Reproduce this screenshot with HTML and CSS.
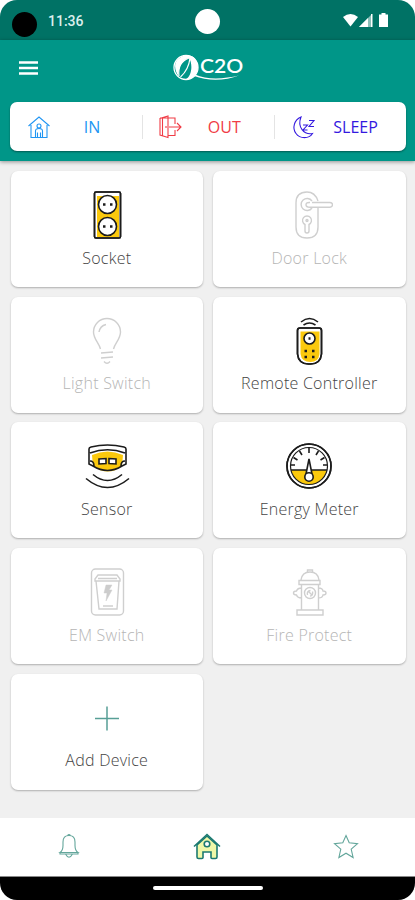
FILE: index.html
```html
<!DOCTYPE html>
<html lang="en">
<head>
  <meta charset="UTF-8">
  <meta name="viewport" content="width=device-width, initial-scale=1">
  <title>C2O</title>
  <link rel="stylesheet" href="styles.css">
</head>
<body>
<div class="phone">

  <div class="status">
    <span class="camera"></span>
    <span class="time">11:36</span>
    <span class="lens"></span>
    <svg class="signals" width="46" height="16" viewBox="0 0 46 16" fill="#fff">
      <path d="M0 4Q7.500-2 15 4L7.500 13.500z"/>
      <path d="M16 14L29 1v13z" opacity=".55"/>
      <path d="M16 14L25 5v9z"/>
      <path d="M28 1h1.500v13H28z"/>
      <path d="M38.500 0h4v1.500H45V14h-9V1.500h2.500z"/>
    </svg>
  </div>

  <header class="header">
    <div class="toolbar">
      <svg class="menu" width="20" height="14" viewBox="0 0 20 14" stroke="#fff" stroke-width="2.300">
        <path d="M0 1.500h19M0 7h19M0 12.500h19"/>
      </svg>
      <div class="logo">
        <svg width="68" height="28" viewBox="0 0 68 28" fill="none">
          <circle cx="13" cy="13.500" r="12" stroke="#fff" stroke-width="1.300"/>
          <path d="M12 1.500C20 0 25 6 25 13.500C25 20 20 26 12.500 25.500C19 22 20 10 16 4C10 5 5 13 5.500 22C1 16-1 5 12 1.500z" fill="#fff"/>
          <path d="M17 4C16 13 13 18 7.500 23M16 4C8 7 5 14 6 22" stroke="#fff" stroke-width="1.200"/>
          <path d="M22 20.500C34 26 51 25 66 21.500C52 27 34 27 21 22z" fill="#fff"/>
        </svg>
        <span class="logo-text">C2O</span>
      </div>
    </div>

    <div class="modes">
      <div class="mode in">
        <svg width="24" height="24" viewBox="0 0 24 24">
          <path d="M1.500 11L12 2l10.500 9M4 10v12.500h16V10M8.500 22v-6q0-2.500 3.500-2.500t3.500 2.500v6M10.500 22v-4.500M13.500 22v-4.500"/>
          <circle cx="12" cy="11" r="2"/>
        </svg>
        <span>IN</span>
      </div>
      <div class="mode out">
        <svg width="24" height="24" viewBox="0 0 24 24">
          <path d="M10 22.500L2 20V3.500L10 1v21.500zM2 3h15v6M17 15v5.500h-7M4.500 3v17.500M8 11v2M11 12h12M19 8l4 4-4 4"/>
        </svg>
        <span>OUT</span>
      </div>
      <div class="mode sleep">
        <svg width="24" height="24" viewBox="0 0 24 24">
          <path d="M9 2C2 5 0 13 4 18.500C8 24 17 24 20.500 18.500C12 20 5 12 9 2zM11 10h4.500l-4.500 5h4.500M17 5.500h5l-5 6h5"/>
        </svg>
        <span>SLEEP</span>
      </div>
    </div>
  </header>

  <main class="devices">
    <div class="card">
      <svg class="icon" viewBox="0 0 48 48">
        <rect x="11.500" y="1" width="26" height="46" rx="1.500" fill="#fff"/>
        <path class="fill" d="M14 5h22v41H14z"/>
        <rect x="11.500" y="1" width="26" height="46" rx="1.500"/>
        <circle cx="24.500" cy="13.500" r="9" fill="#fff"/>
        <circle cx="24.500" cy="35.500" r="9" fill="#fff"/>
        <path d="M20 13.500h2.500M27 13.500h2.500M20 35.500h2.500M27 35.500h2.500" stroke-width="2.500"/>
      </svg>
      <span>Socket</span>
    </div>

    <div class="card off">
      <svg class="icon" viewBox="0 0 48 48">
        <path d="M33 10Q30 1 22 1Q11 1 11 12v24q0 11 11 11t11-11V17"/>
        <path d="M27 11.500h18q2.500 0 2.500 2.300t-2.500 2.400H25q-4 0-4-2.500t4-2.200"/>
        <path d="M27 10a6 6 0 1 0 0 7"/>
        <path d="M20 33.500a4.500 4.500 0 1 1 4 0V40q0 2-2 2t-2-2z"/>
        <circle cx="22" cy="29.500" r="1"/>
      </svg>
      <span>Door Lock</span>
    </div>

    <div class="card off">
      <svg class="icon" viewBox="0 0 48 48">
        <path d="M17.500 32C16 26 10.500 22 10.500 15a13.500 13.500 0 0 1 27 0C37.500 22 32 26 30.500 32M16 15q1-6 7-7.500M18 36l12-1M18 41l12-1M21 44.500q3 3.500 6 0"/>
      </svg>
      <span>Light Switch</span>
    </div>

    <div class="card">
      <svg class="icon" viewBox="0 0 48 48">
        <path d="M16 5q8.500-7 17 0M18.500 8q6-4 12 0"/>
        <path d="M12.500 13.500q0-2.500 2.500-2.500h19q2.500 0 2.500 2.500V37q-1 10-11 10h-2q-10 0-11-10z" fill="#fff"/>
        <path class="fill" d="M15.500 14.500h19V37q-1 8-9 8q-9 0-10-8z"/>
        <path d="M12.500 13.500q0-2.500 2.500-2.500h19q2.500 0 2.500 2.500V37q-1 10-11 10h-2q-10 0-11-10z"/>
        <circle cx="24.500" cy="21.500" r="5.500" fill="#fff"/>
        <path d="M23.500 21.500h2M19.500 34h2.500M27 34h2.500M19.500 40h2.500M27 40h2.500" stroke-width="2.500"/>
      </svg>
      <span>Remote Controller</span>
    </div>

    <div class="card">
      <svg class="icon" viewBox="0 0 48 48">
        <path class="fill" d="M9 13q15.500-7 31 0l-1 11q-14 11-29 0z"/>
        <path d="M6 7q0-1.500 2-2 16.500-4 33 0 2 .5 2 2v15l-4 2q-14.500 9-29 0l-4-2zM7 11q17.500-6.500 35 0M7 19q4 0 4 5M42 19q-4 0-4 5"/>
        <path d="M16 17l7-.5v5l-7 .5zM26 16.500l7 .5v5l-7-.5z" fill="#fff"/>
        <path d="M10 32.500q14.500 12 29 0M3 36.500q21.500 18 43 0"/>
      </svg>
      <span>Sensor</span>
    </div>

    <div class="card">
      <svg class="icon" viewBox="0 0 48 48">
        <circle cx="24" cy="24" r="22" fill="#fff"/>
        <path class="fill" d="M6 28h36Q38 42 24 42.500Q10 42 6 28z"/>
        <circle cx="24" cy="24" r="22"/>
        <circle cx="24" cy="24" r="18.500" stroke-width="1.200"/>
        <path d="M6 28h36M24 6v5M14.500 9l2.500 4M33.500 9L31 13M8.500 15.500l4 2.500M39.500 15.500l-4 2.500M6 23h4M38 23h4"/>
        <path d="M24 17l-3 15h6z" fill="#fff"/>
        <circle cx="24" cy="35" r="4.200" fill="#fff"/>
      </svg>
      <span>Energy Meter</span>
    </div>

    <div class="card off">
      <svg class="icon" viewBox="0 0 48 48">
        <rect x="8.500" y="1" width="32" height="46" rx="4"/>
        <path d="M15 7h19l3 4v2H12v-2zM13 13l3 28h18l2-28M15 10.500h19M20 38h10"/>
        <path d="M23 17h6l-3 5h3l-6 11 1-8h-3z" fill="#ccc" stroke-width=".5"/>
      </svg>
      <span>EM Switch</span>
    </div>

    <div class="card off">
      <svg class="icon" viewBox="0 0 48 48">
        <path d="M16 12q1-8 9-8t9 8M22.500 4V2h5v2M14 12.500h21v4H14zM16.500 16.500v25M33.500 16.500v25M12 42h26v5H12zM16.500 20q-4 0-5 3-3 0-3 2t3 2q1 3 5 3M33.500 20q4 0 4.500 3 3 0 3 2t-3 2q-.5 3-4.500 3"/>
        <circle cx="25" cy="25" r="5.500"/>
        <path d="M22.500 27q-1-4 3-4.500M27.500 23.500q1 4-2.500 4.500M23 23l4.500 4.500"/>
      </svg>
      <span>Fire Protect</span>
    </div>

    <div class="card add">
      <svg class="icon" viewBox="0 0 48 48">
        <path d="M24 12.500v24M12 24.500h24"/>
      </svg>
      <span>Add Device</span>
    </div>
  </main>

  <nav class="nav">
    <a>
      <svg width="28" height="28" viewBox="0 0 28 28">
        <path d="M5 20.500q3-2 3-7V10q0-6.500 6-6.500t6 6.500v3.500q0 5 3 7zM5 20.500v1.500h18v-1.500M12.500 3.500q1.500-2 3 0M10.500 22q3.500 6.500 7 0"/>
      </svg>
    </a>
    <a class="active">
      <svg width="28" height="28" viewBox="0 0 28 28">
        <path d="M4 13v12q0 1.500 1.500 1.500H9q1 0 1-1V20h8v5.500q0 1 1 1h3.500q1.500 0 1.500-1.500V13L14 4z" fill="#f0f8a8"/>
        <path d="M1 14.500L14 2.500l13 12"/>
        <circle cx="14" cy="12" r="2.800" fill="#fff"/>
      </svg>
    </a>
    <a>
      <svg width="28" height="28" viewBox="0 0 28 28">
        <path d="M14 3.500l3.200 7.300 8.300.8-6.300 5.600 1.900 8.300-7.100-4.300-7.100 4.300 1.900-8.300-6.300-5.600 8.300-.8z"/>
      </svg>
    </a>
  </nav>

  <div class="gesture"><span></span></div>
</div>
</body>
</html>
```

FILE: styles.css
```css
* {
  box-sizing: border-box;
}
body {
  margin: 0;
  background: #fff;
  font-family: "Open Sans", "Noto Sans", sans-serif;
}
.phone {
  display: flex;
  flex-direction: column;
  width: 415px;
  height: 900px;
  overflow: hidden;
  border-radius: 17px;
  background: #f0f0f0;
}

/* status bar */
.status {
  display: flex;
  align-items: center;
  height: 40px;
  flex: none;
  padding: 2px 26px 0 12px;
  background: #007265;
}
.camera, .lens {
  width: 25px;
  height: 25px;
  border-radius: 50%;
  background: #000;
}
.camera {
  margin-top: 6px;
}
.lens {
  margin-left: 99px;
  background: #fff;
}
.time {
  width: 48px;
  margin-left: 11px;
  font: 500 14px Roboto, sans-serif;
  color: #dcefed;
}
.signals {
  margin-left: auto;
  margin-top: -1px;
}

/* green header */
.header {
  height: 121px;
  flex: none;
  padding: 0 10px;
  background: #009688;
  box-shadow: 0 1px 4px rgba(0,0,0,0.4);
}
.toolbar {
  display: flex;
  align-items: center;
  height: 62px;
  padding-left: 9px;
}
.menu {
  margin-top: -6px;
}
.logo {
  position: relative;
  width: 68px;
  height: 28px;
  margin: -6px 0 0 134px;
}
.logo-text {
  position: absolute;
  left: 27px;
  top: 0;
  font: 600 19px/24px Lato, sans-serif;
  transform: scaleX(1.11);
  transform-origin: left;
  color: #fff;
}
.modes {
  display: grid;
  grid-template-columns: repeat(3, 1fr);
  align-items: center;
  height: 49px;
  margin-right: -0.5px;
  background: #fff;
  border-radius: 7px;
  box-shadow: 0 1px 2px rgba(0,0,0,0.4);
}
.mode {
  display: flex;
  align-items: center;
  height: 24px;
  padding-left: 17px;
  font-size: 16px;
}
.mode + .mode {
  border-left: 1px solid #e4e4e4;
}
.mode svg {
  fill: none;
  stroke: currentColor;
  stroke-width: 1.1;
}
.mode span {
  flex: 1;
  text-align: center;
}
.in { color: #2196f3; }
.in span { margin-right: 9px; }
.out { color: #f03c46; }
.out { padding-left: 15px; }
.out span { margin-left: 6px; margin-right: 13px; }
.sleep { color: #3419df; }
.sleep span { margin-left: 1px; margin-right: 11px; }

/* device grid */
.devices {
  display: grid;
  grid-template-columns: 1fr 1fr;
  grid-auto-rows: 116px;
  gap: 9.7px 10px;
  height: 657px;
  flex: none;
  padding: 10px 9.5px 0 10.5px;
  align-content: start;
}
.card {
  display: flex;
  flex-direction: column;
  align-items: center;
  padding-top: 20px;
  background: #fff;
  border-radius: 7px;
  box-shadow: 0 1px 2px rgba(0,0,0,0.28);
  color: #444;
}
.card span {
  margin-top: 6.5px;
  font-size: 16px;
  line-height: 24px;
  font-weight: 300;
  letter-spacing: 0.25px;
  white-space: nowrap;
}
.icon {
  width: 48px;
  height: 48px;
  flex: none;
  fill: none;
  stroke: #1c1c1c;
  stroke-width: 1.6;
}
.fill {
  fill: #fbc90d;
  stroke: none;
}
.off {
  color: #b5b5b5;
}
.off .icon {
  stroke: #cfcfcf;
  stroke-width: 1.4;
}
.add .icon {
  stroke: #579f96;
  stroke-width: 1.5;
}

/* bottom bar */
.nav {
  display: grid;
  grid-template-columns: repeat(3, 1fr);
  height: 58px;
  flex: none;
  background: #fff;
}
.nav a {
  display: flex;
  align-items: center;
  justify-content: center;
  padding-bottom: 3px;
}
.nav svg {
  fill: none;
  stroke: #63a69b;
  stroke-width: 1.1;
}
.nav .active svg {
  stroke: #1c7a70;
  stroke-width: 1.6;
}
.gesture {
  display: flex;
  justify-content: center;
  flex: 1;
  padding-top: 9px;
  border-top: 1px solid #888;
  background: #000;
}
.gesture span {
  width: 110px;
  height: 4px;
  border-radius: 2px;
  background: #fff;
}
```
